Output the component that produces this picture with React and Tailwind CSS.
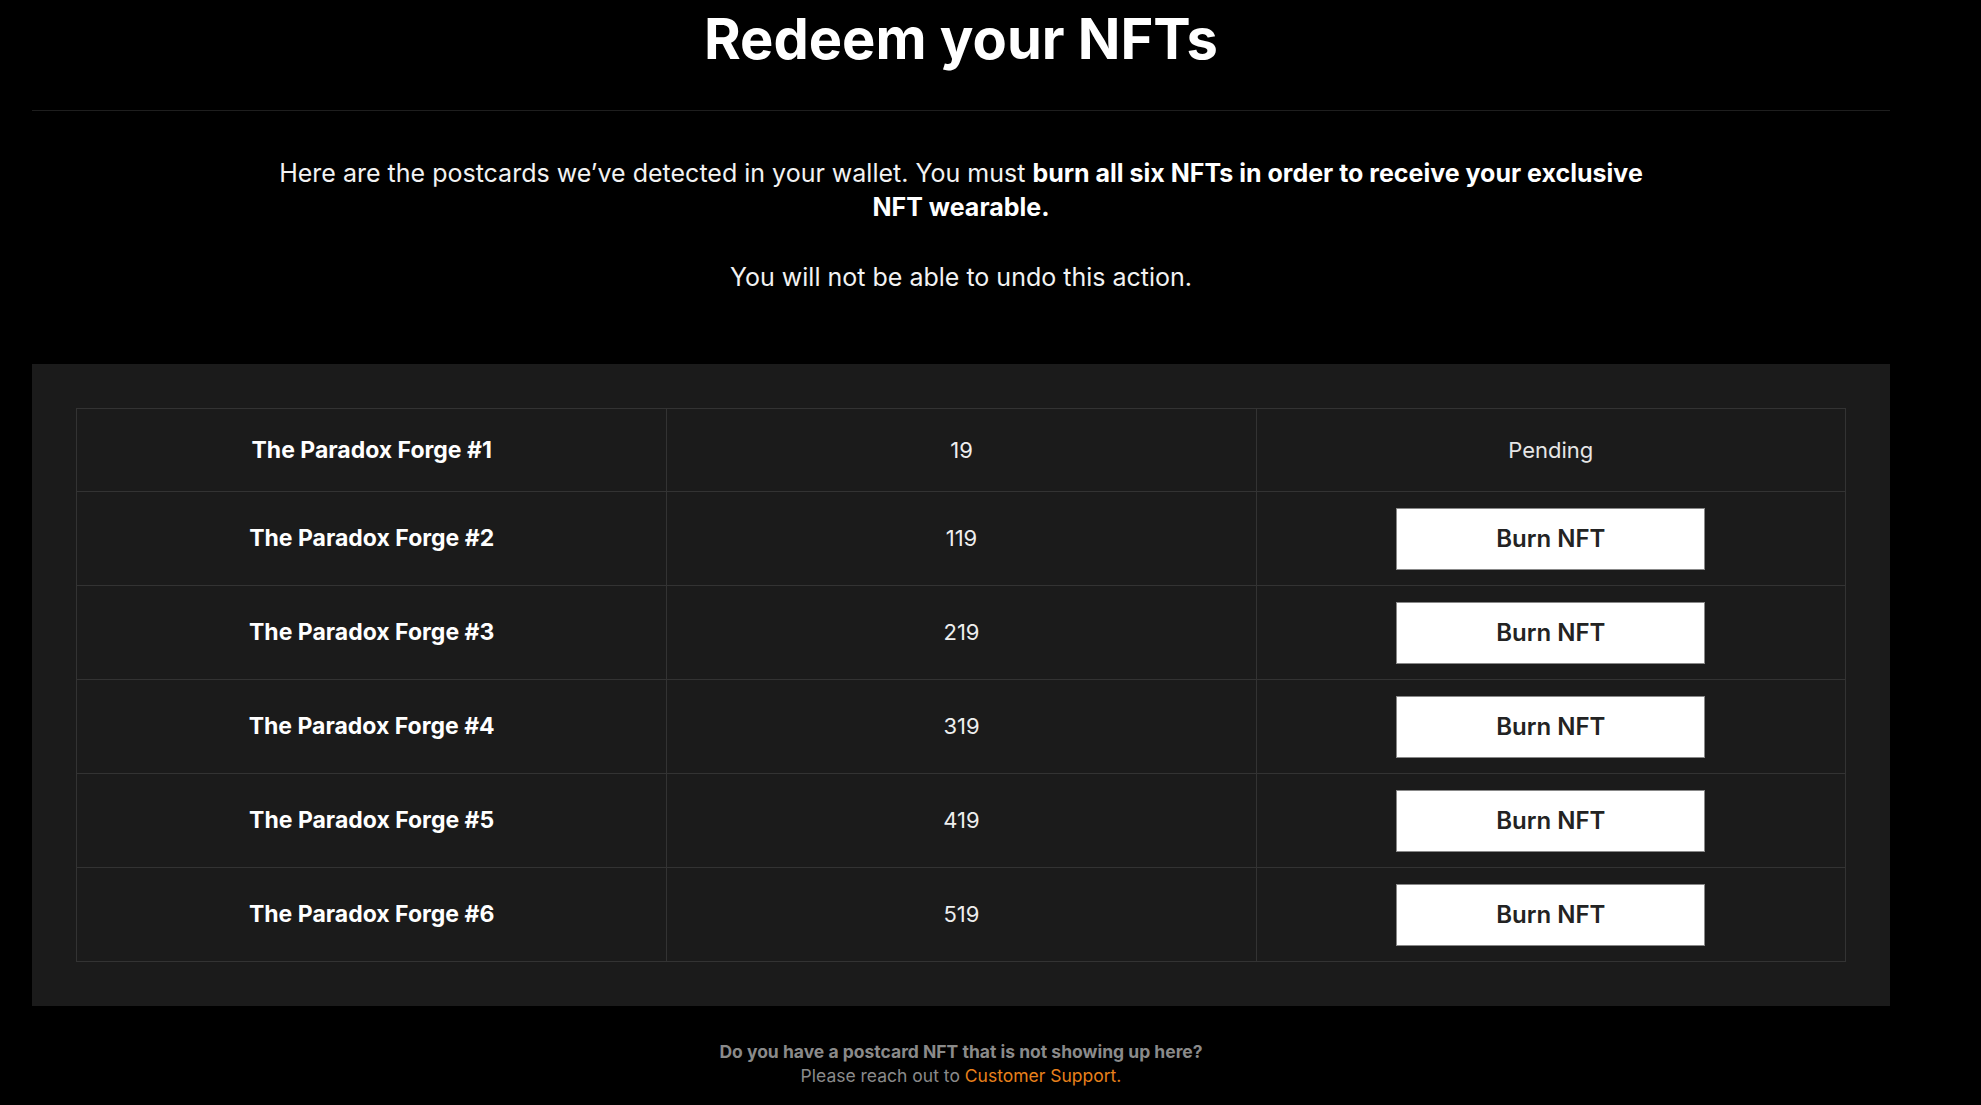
import React from 'react';

const rows = [
  { name: 'The Paradox Forge #1', id: '19', status: 'pending' },
  { name: 'The Paradox Forge #2', id: '119', status: 'burn' },
  { name: 'The Paradox Forge #3', id: '219', status: 'burn' },
  { name: 'The Paradox Forge #4', id: '319', status: 'burn' },
  { name: 'The Paradox Forge #5', id: '419', status: 'burn' },
  { name: 'The Paradox Forge #6', id: '519', status: 'burn' },
];

export default function App() {
  return (
    <div className="min-h-screen bg-black">
      <div className="w-[1922px] text-white font-['Inter','Liberation_Sans',sans-serif] pb-[30px]">
        <div className="mx-[32px] pt-[8px] pb-[40px] border-b border-[#1e1e1e]">
          <h1 className="text-center font-bold text-[56px] leading-[62px] text-white">
            Redeem your NFTs
          </h1>
        </div>

        <div className="flex flex-col items-center mt-[45px]">
          <p className="max-w-[1400px] text-center text-[25px] leading-[34px] text-[#f2f2f2]">
            Here are the postcards we’ve detected in your wallet. You must{' '}
            <span className="font-bold text-white">
              burn all six NFTs in order to receive your exclusive NFT wearable.
            </span>
          </p>
          <p className="mt-[36px] text-center text-[25px] leading-[34px] text-[#f2f2f2]">
            You will not be able to undo this action.
          </p>
        </div>

        <div className="mx-[32px] mt-[70px] bg-[#1b1b1b] p-[44px]">
          <div className="border border-[#333]">
            {rows.map((row, idx) => (
              <div
                key={idx}
                className={`grid grid-cols-3 ${idx > 0 ? 'border-t border-[#333] h-[94px]' : 'h-[82px]'}`}
              >
                <div className="flex items-center justify-center text-[23px] font-bold text-white">
                  {row.name}
                </div>
                <div className="flex items-center justify-center border-l border-[#333] text-[22px] text-[#eee]">
                  {row.id}
                </div>
                <div className="flex items-center justify-center border-l border-[#333]">
                  {row.status === 'pending' ? (
                    <span className="text-[22px] text-[#e6e6e6]">Pending</span>
                  ) : (
                    <button className="w-[309px] h-[62px] bg-white border border-[#888] text-[24px] font-semibold text-[#232323]">
                      Burn NFT
                    </button>
                  )}
                </div>
              </div>
            ))}
          </div>
        </div>

        <div className="mt-[34px] text-center text-[17.5px] leading-[24px] text-[#8a8a8a]">
          <div className="font-bold">Do you have a postcard NFT that is not showing up here?</div>
          <div>
            Please reach out to <a className="text-[#e8811c]">Customer Support.</a>
          </div>
        </div>
      </div>
    </div>
  );
}
